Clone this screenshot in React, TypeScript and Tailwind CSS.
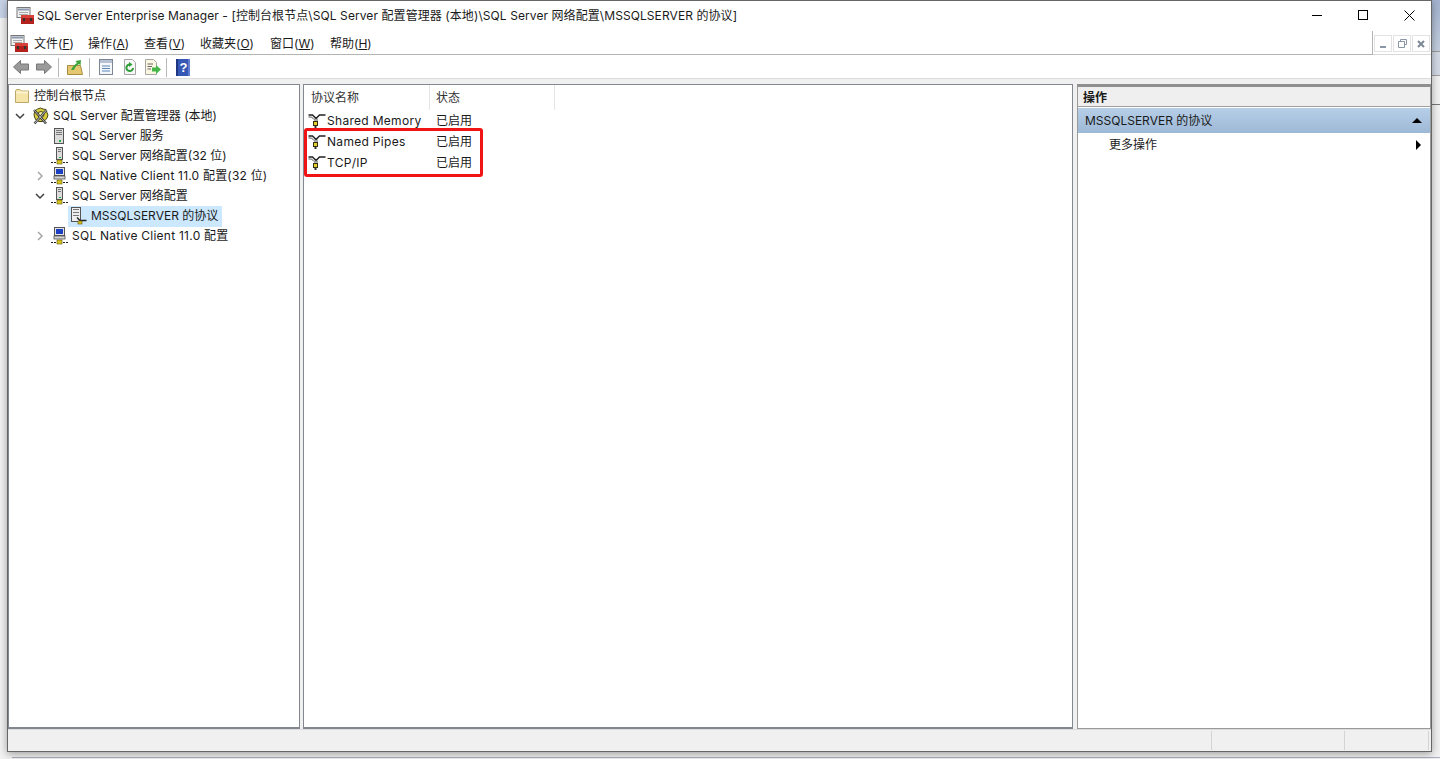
import React from "react";

const font = "font-['Inter','Noto_Sans_CJK_SC',sans-serif]";

const ToolboxIcon = () => (
  <svg width="18" height="18" viewBox="0 0 18 18">
    <rect x="1" y="0.5" width="13" height="10" fill="#f2f2f2" stroke="#777" />
    <rect x="2" y="1.5" width="11" height="2" fill="#8d99ae" />
    <rect x="3" y="5" width="9" height="1" fill="#aaa" />
    <rect x="3" y="7" width="9" height="1" fill="#aaa" />
    <rect x="5" y="8" width="13" height="9" fill="#b3211d" />
    <rect x="5" y="8" width="13" height="3" fill="#d8403a" />
    <rect x="7" y="11" width="2" height="3" fill="#333" />
    <rect x="14" y="11" width="2" height="3" fill="#333" />
  </svg>
);

const FolderIcon = () => (
  <svg width="16" height="16" viewBox="0 0 16 16">
    <path d="M1.5 3V14.5H14.5V3H7.5L6 1.5H2.5Z" fill="#f6e5a8" stroke="#bda768" />
    <rect x="2" y="3.5" width="12" height="2" fill="#fbf3cf" />
  </svg>
);

const ManagerIcon = () => (
  <svg width="17" height="18" viewBox="0 0 17 18">
    <path d="M8.5 1L11 2L14 2.5L15 5.5L16 8L15 11L13 13.5L10 14.5L7 14.5L4 13L2.5 10L2 7L3 4L5.5 2Z" fill="#d8cc3a" stroke="#4a4818" />
    <circle cx="9" cy="7.5" r="3" fill="#f6f1a0" stroke="#4a4818" />
    <path d="M2 3L14 16.5" stroke="#333" strokeWidth="2.4" />
    <path d="M14.5 3L2.5 16.5" stroke="#444" strokeWidth="2.4" />
    <path d="M2 3L14 16.5M14.5 3L2.5 16.5" stroke="#d8d8d8" strokeWidth="0.8" />
  </svg>
);

const ServerIcon = () => (
  <svg width="16" height="16" viewBox="0 0 16 16">
    <rect x="2.5" y="0.5" width="9" height="15" fill="#dcdcdc" stroke="#555" />
    <rect x="4" y="2" width="6" height="1" fill="#777" />
    <rect x="4" y="4" width="6" height="1" fill="#777" />
    <rect x="4" y="6" width="6" height="1" fill="#777" />
    <rect x="7" y="12" width="2" height="2" fill="#22b14c" />
  </svg>
);

const NetServerIcon = () => (
  <svg width="17" height="18" viewBox="0 0 17 18">
    <rect x="5.5" y="0.5" width="6" height="12" fill="#dcdcdc" stroke="#555" />
    <rect x="7" y="2" width="3" height="1" fill="#777" />
    <rect x="7" y="4" width="3" height="1" fill="#777" />
    <rect x="8" y="10" width="2" height="1" fill="#22b14c" />
    <path d="M0 15.5H17" stroke="#222" strokeDasharray="2 1" />
    <rect x="6" y="13" width="5" height="4" fill="#d9c21f" stroke="#5a5210" strokeWidth="0.6" />
  </svg>
);

const ClientIcon = () => (
  <svg width="17" height="18" viewBox="0 0 17 18">
    <rect x="3.5" y="0.5" width="10" height="8" fill="#e4e4e4" stroke="#555" />
    <rect x="5" y="2" width="7" height="5" fill="#1c3fc4" />
    <rect x="3" y="9" width="11" height="3" fill="#d4d4d4" stroke="#555" strokeWidth="0.8" />
    <path d="M0 15.5H17" stroke="#222" strokeDasharray="2 1" />
    <rect x="6" y="13" width="5" height="4" fill="#d9c21f" stroke="#5a5210" strokeWidth="0.6" />
  </svg>
);

const ProtocolsIcon = () => (
  <svg width="17" height="18" viewBox="0 0 17 18">
    <rect x="1.5" y="0.5" width="9" height="14" fill="#eee" stroke="#555" />
    <rect x="3" y="2" width="6" height="1" fill="#777" />
    <rect x="3" y="5" width="6" height="1" fill="#777" />
    <rect x="3" y="8" width="6" height="1" fill="#777" />
    <path d="M7 10.5L10 13.5H16.5" stroke="#222" fill="none" strokeWidth="1.3" />
    <rect x="8" y="14" width="4" height="3" fill="#d9c21f" stroke="#5a5210" strokeWidth="0.6" />
  </svg>
);

const PipeIcon = () => (
  <svg width="18" height="16" viewBox="0 0 18 16">
    <path d="M0.5 2H4.5L8 5.5L11.5 2H17.5" stroke="#222" strokeWidth="1.5" fill="none" />
    <path d="M0.5 4H3.5L6 6.5M7 5.5V9M9 5.5V9" stroke="#555" strokeWidth="1" fill="none" />
    <rect x="5.5" y="8.5" width="4" height="4" fill="#e3cf2e" stroke="#33300c" />
    <rect x="6.5" y="12.5" width="2" height="2.5" fill="#333" />
  </svg>
);

const ArrowIcon = ({ flip }: { flip?: boolean }) => (
  <svg width="16" height="16" viewBox="0 0 16 16" className={flip ? "-scale-x-100" : ""}>
    <path d="M0.5 8L7.5 1.5V5H15.5V11H7.5V14.5Z" fill="#9a9a9a" stroke="#777" />
  </svg>
);

const UpFolderIcon = () => (
  <svg width="16" height="16" viewBox="0 0 16 16">
    <path d="M0.5 6.5H13.5L15.5 15.5H0.5Z" fill="#e4c770" stroke="#a98c3e" />
    <path d="M4 11C6 7 8 5 10 4L8.5 2L14 1L13.5 6.5L12 5C10 6 8 8 7 11Z" fill="#3da53b" />
  </svg>
);

const PropsIcon = () => (
  <svg width="16" height="16" viewBox="0 0 16 16">
    <rect x="1.5" y="0.5" width="13" height="15" fill="#f4f6fa" stroke="#7d8794" />
    <rect x="2" y="1" width="12" height="3" fill="#b7c1d3" />
    <path d="M4 7H12M4 9.5H12M4 12H12" stroke="#5a87b8" />
  </svg>
);

const RefreshIcon = () => (
  <svg width="16" height="16" viewBox="0 0 16 16">
    <path d="M2.5 0.5H10.5L13.5 3.5V15.5H2.5Z" fill="#f7f7f7" stroke="#a5a5a5" />
    <path d="M11 9A3.3 3.3 0 1 1 8 5.5" fill="none" stroke="#2f9e35" strokeWidth="2" />
    <path d="M7 3L10.5 5.5L7 8Z" fill="#2f9e35" />
  </svg>
);

const ExportIcon = () => (
  <svg width="17" height="16" viewBox="0 0 17 16">
    <path d="M1.5 0.5H9.5L12.5 3.5V15.5H1.5Z" fill="#fbf6df" stroke="#a5a5a5" />
    <path d="M3.5 5H9M3.5 7.5H8M3.5 10H7" stroke="#666" />
    <path d="M8 8.5H12V6L17 10.5L12 15V12.5H8Z" fill="#45b649" />
  </svg>
);

const HelpIcon = () => (
  <svg width="14" height="17" viewBox="0 0 14 17">
    <rect x="0" y="0" width="14" height="17" fill="#3558b4" />
    <rect x="0" y="0" width="2" height="17" fill="#1f3683" />
    <rect x="12" y="0" width="2" height="17" fill="#5f7fd0" />
    <text x="7.5" y="13" fontSize="13" fontWeight="700" fill="#fff" textAnchor="middle" fontFamily="Liberation Sans">?</text>
  </svg>
);

const Chevron = ({ open }: { open?: boolean }) => (
  <svg width="10" height="10" viewBox="0 0 10 10" className="shrink-0">
    {open ? (
      <path d="M1 3L5 7L9 3" fill="none" stroke="#404040" strokeWidth="1.5" />
    ) : (
      <path d="M3 1L7 5L3 9" fill="none" stroke="#a6a6a6" strokeWidth="1.5" />
    )}
  </svg>
);

const Sep = () => <div className="w-px h-[19px] bg-[#b9b9b9]" />;

const menus = [
  { label: "文件", key: "F", w: "w-[54px]" },
  { label: "操作", key: "A", w: "w-[56px]" },
  { label: "查看", key: "V", w: "w-[56px]" },
  { label: "收藏夹", key: "O", w: "w-[70px]" },
  { label: "窗口", key: "W", w: "w-[60px]" },
  { label: "帮助", key: "H", w: "w-[44px]" },
];

type TreeRow = {
  label: string;
  pad: string;
  chevron?: "open" | "closed";
  gap?: string;
  track?: string;
  icon: React.ReactNode;
  active?: boolean;
};

const tree: TreeRow[] = [
  { label: "控制台根节点", pad: "pl-[4px]", icon: <FolderIcon /> },
  { label: "SQL Server 配置管理器 (本地)", pad: "pl-[6px]", chevron: "open", gap: "mr-[7px]", icon: <ManagerIcon /> },
  { label: "SQL Server 服务", pad: "pl-[42px]", icon: <ServerIcon /> },
  { label: "SQL Server 网络配置(32 位)", pad: "pl-[42px]", icon: <NetServerIcon /> },
  { label: "SQL Native Client 11.0 配置(32 位)", pad: "pl-[26px]", chevron: "closed", gap: "mr-[6px]", track: "tracking-[0.2px]", icon: <ClientIcon /> },
  { label: "SQL Server 网络配置", pad: "pl-[26px]", chevron: "open", gap: "mr-[6px]", icon: <NetServerIcon /> },
  { label: "MSSQLSERVER 的协议", pad: "pl-[59px]", icon: <ProtocolsIcon />, active: true },
  { label: "SQL Native Client 11.0 配置", pad: "pl-[26px]", chevron: "closed", gap: "mr-[6px]", track: "tracking-[0.25px]", icon: <ClientIcon /> },
];

const protocols = ["Shared Memory", "Named Pipes", "TCP/IP"];

export default function App() {
  return (
    <div className={`relative h-[759px] w-[1440px] overflow-hidden bg-[#f2f2f2] ${font} text-xs text-[#1a1a1a]`}>
      {/* desktop behind the window */}
      <div className="absolute left-0 top-0 h-[18px] w-[7px] bg-[#c6d2e6]" />
      <div className="absolute right-0 top-0 h-[51px] w-[8px] bg-gradient-to-b from-[#a3b2cf] to-[#c3cede]" />
      <div className="absolute right-0 top-[51px] h-px w-[8px] bg-[#9a9a9a]" />
      <div className="absolute right-0 top-[52px] h-[23px] w-[8px] bg-[#d3dae6]" />
      <div className="absolute right-0 top-[75px] h-px w-[8px] bg-[#a0a0a0]" />
      <div className="absolute right-0 top-[104px] h-px w-[8px] bg-[#777]" />
      <div className="absolute left-[12px] right-0 bottom-[1px] h-px bg-[#a9afbd]" />
      <div className="relative ml-[7px] flex h-[752px] w-[1425px] flex-col border border-[#666] bg-[#f0f0f0] shadow-[0_2px_8px_rgba(0,0,0,0.35)]">
        {/* title bar */}
        <div className="flex h-[30px] shrink-0 items-center bg-white pl-[8px]">
          <ToolboxIcon />
          <span className="ml-[3px] whitespace-nowrap tracking-[0.08px]">
            SQL Server Enterprise Manager - [控制台根节点\SQL Server 配置管理器 (本地)\SQL Server 网络配置\MSSQLSERVER 的协议]
          </span>
          <div className="ml-auto flex h-full items-center pb-[2px]">
            <div className="flex w-[44px] justify-center">
              <div className="h-px w-[10px] bg-black" />
            </div>
            <div className="flex w-[48px] justify-center">
              <div className="h-[10px] w-[10px] border border-black" />
            </div>
            <div className="flex w-[44px] justify-center">
              <svg width="11" height="11" viewBox="0 0 11 11">
                <path d="M0.5 0.5L10.5 10.5M10.5 0.5L0.5 10.5" stroke="#000" />
              </svg>
            </div>
          </div>
        </div>
        {/* menu bar */}
        <div className="flex h-[24px] shrink-0 bg-white">
          <div className="flex flex-1 items-center border-b border-r border-[#b4b4b4] pl-[2px] pt-[2px]">
            <ToolboxIcon />
            <div className="ml-[6px] flex">
              {menus.map((m) => (
                <span key={m.key} className={`${m.w} whitespace-nowrap`}>
                  {m.label}(<span className="underline">{m.key}</span>)
                </span>
              ))}
            </div>
          </div>
          <div className="flex w-[58px] items-center justify-center gap-px border-b border-[#d8d8d8] pt-[2px]">
            <div className="flex h-[17px] w-[18px] items-end justify-center border border-[#e3e3e3] pb-[3px]">
              <div className="h-[2px] w-[6px] bg-[#8a96a5]" />
            </div>
            <div className="flex h-[17px] w-[18px] items-center justify-center border border-[#e3e3e3]">
              <svg width="9" height="9" viewBox="0 0 9 9">
                <path d="M2.5 2.5V0.5H8.5V5.5H6.5M0.5 2.5H6.5V8.5H0.5Z" fill="none" stroke="#8a96a5" />
              </svg>
            </div>
            <div className="flex h-[17px] w-[18px] items-center justify-center border border-[#e3e3e3]">
              <svg width="8" height="8" viewBox="0 0 8 8">
                <path d="M1 1L7 7M7 1L1 7" stroke="#7d8996" strokeWidth="2" />
              </svg>
            </div>
          </div>
        </div>
        {/* toolbar */}
        <div className="flex h-[24px] shrink-0 items-center border-b border-[#dcdcdc] bg-white pl-[5px] pt-px">
          <ArrowIcon />
          <div className="ml-[7px]">
            <ArrowIcon flip />
          </div>
          <div className="ml-[6px]"><Sep /></div>
          <div className="ml-[8px]"><UpFolderIcon /></div>
          <div className="ml-[6px]"><Sep /></div>
          <div className="ml-[8px]"><PropsIcon /></div>
          <div className="ml-[8px]"><RefreshIcon /></div>
          <div className="ml-[6px]"><ExportIcon /></div>
          <div className="ml-[5px]"><Sep /></div>
          <div className="ml-[9px]"><HelpIcon /></div>
        </div>
        {/* panes */}
        <div className="flex min-h-0 flex-1 gap-[3px] pt-[5px]">
          <div className="w-[292px] shrink-0 border border-b-2 border-[#828790] bg-white pt-px">
            {tree.map((r) => (
              <div key={r.label} className={`flex h-[20px] items-center ${r.pad}`}>
                {r.chevron && (
                  <div className={r.gap}>
                    <Chevron open={r.chevron === "open"} />
                  </div>
                )}
                <div className={r.active ? "flex h-[21px] items-center bg-[#cce8ff] pl-[2px] pr-[4px]" : "flex items-center"}>
                  <div className="flex w-[17px] justify-center">{r.icon}</div>
                  <span className={`ml-[4px] whitespace-nowrap ${r.track ?? ""}`}>{r.label}</span>
                </div>
              </div>
            ))}
          </div>
          <div className="relative flex-1 border border-b-2 border-[#828790] bg-white">
            <div className="flex h-[25px] items-center">
              <div className="h-full w-[126px] border-r border-[#e5e5e5] pl-[7px] pt-[5px] text-[#333]">协议名称</div>
              <div className="h-full w-[125px] border-r border-[#e5e5e5] pl-[6px] pt-[5px] text-[#333]">状态</div>
            </div>
            {protocols.map((p) => (
              <div key={p} className="flex h-[21px] items-center">
                <div className="flex w-[126px] items-center pl-[4px]">
                  <PipeIcon />
                  <span className="ml-[1px] whitespace-nowrap tracking-[0.3px]">{p}</span>
                </div>
                <span className="pl-[6px]">已启用</span>
              </div>
            ))}
            <div className="absolute left-0 top-[43px] h-[49px] w-[179px] rounded-[3px] border-[3px] border-[#f01414]" />
          </div>
          <div className="ml-[1px] flex w-[354px] shrink-0 flex-col border border-[#9a9a9a] border-t-[3px] border-t-[#8f8f8f] bg-white">
            <div className="flex h-[20px] shrink-0 items-center border-b border-[#a0a0a0] bg-[#efefef] pl-[5px] pt-[2px] font-bold">操作</div>
            <div className="mt-px flex h-[25px] shrink-0 items-center justify-between bg-gradient-to-b from-[#b7cfe8] to-[#9db8d6] pl-[7px] pr-[8px]">
              <span>MSSQLSERVER 的协议</span>
              <div className="h-0 w-0 border-x-[5px] border-b-[5px] border-x-transparent border-b-black" />
            </div>
            <div className="flex h-[23px] shrink-0 items-center justify-between pl-[31px] pr-[9px]">
              <span>更多操作</span>
              <div className="h-0 w-0 border-y-[5px] border-l-[5px] border-y-transparent border-l-black" />
            </div>
          </div>
        </div>
        {/* status bar */}
        <div className="flex h-[22px] shrink-0 justify-end border-t border-[#dcdcdc] bg-[#f0f0f0]">
          <div className="my-[1px] w-[133px] border-l border-[#d4d4d4]" />
          <div className="my-[1px] mr-[2px] w-[85px] border-x border-[#d4d4d4]" />
        </div>
      </div>
    </div>
  );
}
